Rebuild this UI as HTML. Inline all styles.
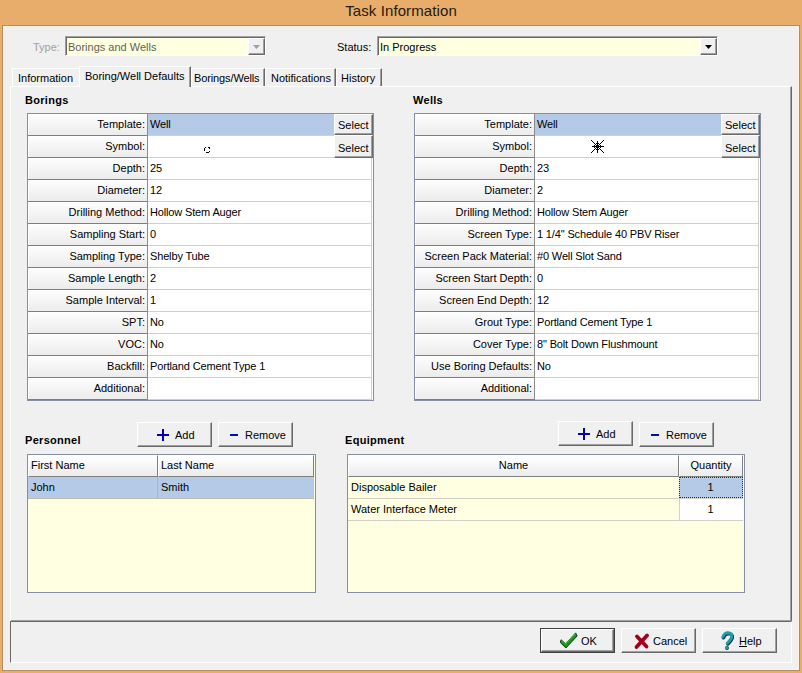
<!DOCTYPE html><html><head><meta charset="utf-8"><style>
html,body{margin:0;padding:0}
body{width:802px;height:673px;overflow:hidden;position:relative;background:#e8ad6b;font-family:"Liberation Sans",sans-serif;font-size:11px;color:#000}
body div{position:absolute;box-sizing:border-box}
.t{white-space:nowrap;line-height:13px;height:13px;letter-spacing:0}
.b{font-weight:bold;letter-spacing:0.3px}
</style></head><body>
<div style="left:2px;top:25px;width:798px;height:646px;background:#b88d5c"></div>
<div style="left:3px;top:26px;width:796px;height:644px;background:#fcf3e6"></div>
<div style="left:4px;top:27px;width:794px;height:642px;background:#f0f0f0"></div>
<div style="left:0;top:1px;width:802px;text-align:center;font-size:15px;line-height:19px;color:#25190d;letter-spacing:0.1px">Task Information</div>
<div class="t" style="left:33px;top:41px;color:#a0a0a0">Type:</div>
<div style="left:65px;top:36px;width:201px;height:20px;background:#ffffe1;border-top:1px solid #a0a0a0;border-left:1px solid #a0a0a0;border-right:1px solid #fff;border-bottom:1px solid #fff"></div>
<div style="left:66px;top:37px;width:199px;height:1px;background:#696969"></div>
<div style="left:66px;top:37px;width:1px;height:18px;background:#696969"></div>
<div class="t" style="left:68px;top:41px;color:#5f5f58">Borings and Wells</div>
<div style="left:248px;top:38px;width:17px;height:17px;background:#f0f0f0;border-top:1px solid #fff;border-left:1px solid #fff;border-right:1px solid #696969;border-bottom:1px solid #696969;box-sizing:border-box;"></div>
<div style="left:249px;top:53px;width:15px;height:1px;background:#a0a0a0"></div>
<div style="left:263px;top:39px;width:1px;height:15px;background:#a0a0a0"></div>
<svg style="position:absolute;left:253px;top:45px" width="8" height="5"><polygon points="0,0 7,0 3.5,4" fill="#a0a0a0"/></svg>
<div class="t" style="left:337px;top:41px;">Status:</div>
<div style="left:377px;top:36px;width:341px;height:20px;background:#ffffe1;border-top:1px solid #a0a0a0;border-left:1px solid #a0a0a0;border-right:1px solid #fff;border-bottom:1px solid #fff"></div>
<div style="left:378px;top:37px;width:339px;height:1px;background:#696969"></div>
<div style="left:378px;top:37px;width:1px;height:18px;background:#696969"></div>
<div class="t" style="left:380px;top:41px;color:#000">In Progress</div>
<div style="left:700px;top:38px;width:17px;height:17px;background:#f0f0f0;border-top:1px solid #fff;border-left:1px solid #fff;border-right:1px solid #696969;border-bottom:1px solid #696969;box-sizing:border-box;"></div>
<div style="left:701px;top:53px;width:15px;height:1px;background:#a0a0a0"></div>
<div style="left:715px;top:39px;width:1px;height:15px;background:#a0a0a0"></div>
<svg style="position:absolute;left:705px;top:45px" width="8" height="5"><polygon points="0,0 7,0 3.5,4" fill="#000"/></svg>
<div style="left:10px;top:86px;width:782px;height:536px;background:#f0f0f0;border-top:1px solid #fff;border-left:1px solid #fff;border-right:1px solid #696969;border-bottom:1px solid #696969"></div>
<div style="left:790px;top:87px;width:1px;height:534px;background:#a0a0a0"></div>
<div style="left:11px;top:620px;width:780px;height:1px;background:#a0a0a0"></div>
<div style="left:12px;top:68px;width:67px;height:18px;background:#f0f0f0;border-top:1px solid #fff;border-left:1px solid #fff"></div>
<div class="t" style="left:18px;top:72px;">Information</div>
<div style="left:191px;top:68px;width:74px;height:18px;background:#f0f0f0;border-top:1px solid #fff;border-left:1px solid #fff;border-right:1px solid #696969"></div>
<div style="left:263px;top:69px;width:1px;height:17px;background:#a0a0a0"></div>
<div class="t" style="left:194px;top:72px;letter-spacing:-0.12px">Borings/Wells</div>
<div style="left:265px;top:68px;width:71px;height:18px;background:#f0f0f0;border-top:1px solid #fff;border-left:1px solid #fff;border-right:1px solid #696969"></div>
<div style="left:334px;top:69px;width:1px;height:17px;background:#a0a0a0"></div>
<div class="t" style="left:271px;top:72px;letter-spacing:0px">Notifications</div>
<div style="left:336px;top:68px;width:46px;height:18px;background:#f0f0f0;border-top:1px solid #fff;border-left:1px solid #fff;border-right:1px solid #696969"></div>
<div style="left:380px;top:69px;width:1px;height:17px;background:#a0a0a0"></div>
<div class="t" style="left:341px;top:72px;letter-spacing:0px">History</div>
<div style="left:79px;top:66px;width:112px;height:21px;background:#f0f0f0;border-top:1px solid #fff;border-left:1px solid #fff;border-right:1px solid #696969"></div>
<div style="left:189px;top:67px;width:1px;height:20px;background:#a0a0a0"></div>
<div style="left:80px;top:86px;width:109px;height:1px;background:#f0f0f0"></div>
<div class="t" style="left:85px;top:70px;">Boring/Well Defaults</div>
<div style="left:10px;top:621px;width:782px;height:42px;border-top:1px solid #696969;border-left:1px solid #696969;border-right:1px solid #fff;border-bottom:1px solid #fff"></div>
<div class="t b" style="left:25px;top:94px;">Borings</div>
<div class="t b" style="left:413px;top:94px;">Wells</div>
<div style="left:27px;top:113px;width:347px;height:288px;background:#fff;border:1px solid #858ea2"></div>
<div style="left:28px;top:114px;width:119px;height:21px;background:linear-gradient(#fdfdfd,#ececec);border-top:1px solid #fff;border-left:1px solid #fff"></div>
<div style="left:28px;top:135px;width:119px;height:1px;background:#7f7f7f"></div>
<div class="t" style="left:28px;top:118px;width:119px;text-align:right;padding-right:2px">Template:</div>
<div style="left:148px;top:114px;width:224px;height:21px;background:#b4cae6"></div>
<div style="left:148px;top:135px;width:224px;height:1px;background:#d4d0c8"></div>
<div class="t" style="left:150px;top:118px;letter-spacing:-0.15px">Well</div>
<div style="left:28px;top:136px;width:119px;height:21px;background:linear-gradient(#fdfdfd,#ececec);border-top:1px solid #fff;border-left:1px solid #fff"></div>
<div style="left:28px;top:157px;width:119px;height:1px;background:#7f7f7f"></div>
<div class="t" style="left:28px;top:140px;width:119px;text-align:right;padding-right:2px">Symbol:</div>
<div style="left:148px;top:157px;width:224px;height:1px;background:#d4d0c8"></div>
<div style="left:28px;top:158px;width:119px;height:21px;background:linear-gradient(#fdfdfd,#ececec);border-top:1px solid #fff;border-left:1px solid #fff"></div>
<div style="left:28px;top:179px;width:119px;height:1px;background:#7f7f7f"></div>
<div class="t" style="left:28px;top:162px;width:119px;text-align:right;padding-right:2px">Depth:</div>
<div style="left:148px;top:179px;width:224px;height:1px;background:#d4d0c8"></div>
<div class="t" style="left:150px;top:162px;letter-spacing:-0.15px">25</div>
<div style="left:28px;top:180px;width:119px;height:21px;background:linear-gradient(#fdfdfd,#ececec);border-top:1px solid #fff;border-left:1px solid #fff"></div>
<div style="left:28px;top:201px;width:119px;height:1px;background:#7f7f7f"></div>
<div class="t" style="left:28px;top:184px;width:119px;text-align:right;padding-right:2px">Diameter:</div>
<div style="left:148px;top:201px;width:224px;height:1px;background:#d4d0c8"></div>
<div class="t" style="left:150px;top:184px;letter-spacing:-0.15px">12</div>
<div style="left:28px;top:202px;width:119px;height:21px;background:linear-gradient(#fdfdfd,#ececec);border-top:1px solid #fff;border-left:1px solid #fff"></div>
<div style="left:28px;top:223px;width:119px;height:1px;background:#7f7f7f"></div>
<div class="t" style="left:28px;top:206px;width:119px;text-align:right;padding-right:2px">Drilling Method:</div>
<div style="left:148px;top:223px;width:224px;height:1px;background:#d4d0c8"></div>
<div class="t" style="left:150px;top:206px;letter-spacing:-0.15px">Hollow Stem Auger</div>
<div style="left:28px;top:224px;width:119px;height:21px;background:linear-gradient(#fdfdfd,#ececec);border-top:1px solid #fff;border-left:1px solid #fff"></div>
<div style="left:28px;top:245px;width:119px;height:1px;background:#7f7f7f"></div>
<div class="t" style="left:28px;top:228px;width:119px;text-align:right;padding-right:2px">Sampling Start:</div>
<div style="left:148px;top:245px;width:224px;height:1px;background:#d4d0c8"></div>
<div class="t" style="left:150px;top:228px;letter-spacing:-0.15px">0</div>
<div style="left:28px;top:246px;width:119px;height:21px;background:linear-gradient(#fdfdfd,#ececec);border-top:1px solid #fff;border-left:1px solid #fff"></div>
<div style="left:28px;top:267px;width:119px;height:1px;background:#7f7f7f"></div>
<div class="t" style="left:28px;top:250px;width:119px;text-align:right;padding-right:2px">Sampling Type:</div>
<div style="left:148px;top:267px;width:224px;height:1px;background:#d4d0c8"></div>
<div class="t" style="left:150px;top:250px;letter-spacing:-0.15px">Shelby Tube</div>
<div style="left:28px;top:268px;width:119px;height:21px;background:linear-gradient(#fdfdfd,#ececec);border-top:1px solid #fff;border-left:1px solid #fff"></div>
<div style="left:28px;top:289px;width:119px;height:1px;background:#7f7f7f"></div>
<div class="t" style="left:28px;top:272px;width:119px;text-align:right;padding-right:2px">Sample Length:</div>
<div style="left:148px;top:289px;width:224px;height:1px;background:#d4d0c8"></div>
<div class="t" style="left:150px;top:272px;letter-spacing:-0.15px">2</div>
<div style="left:28px;top:290px;width:119px;height:21px;background:linear-gradient(#fdfdfd,#ececec);border-top:1px solid #fff;border-left:1px solid #fff"></div>
<div style="left:28px;top:311px;width:119px;height:1px;background:#7f7f7f"></div>
<div class="t" style="left:28px;top:294px;width:119px;text-align:right;padding-right:2px">Sample Interval:</div>
<div style="left:148px;top:311px;width:224px;height:1px;background:#d4d0c8"></div>
<div class="t" style="left:150px;top:294px;letter-spacing:-0.15px">1</div>
<div style="left:28px;top:312px;width:119px;height:21px;background:linear-gradient(#fdfdfd,#ececec);border-top:1px solid #fff;border-left:1px solid #fff"></div>
<div style="left:28px;top:333px;width:119px;height:1px;background:#7f7f7f"></div>
<div class="t" style="left:28px;top:316px;width:119px;text-align:right;padding-right:2px">SPT:</div>
<div style="left:148px;top:333px;width:224px;height:1px;background:#d4d0c8"></div>
<div class="t" style="left:150px;top:316px;letter-spacing:-0.15px">No</div>
<div style="left:28px;top:334px;width:119px;height:21px;background:linear-gradient(#fdfdfd,#ececec);border-top:1px solid #fff;border-left:1px solid #fff"></div>
<div style="left:28px;top:355px;width:119px;height:1px;background:#7f7f7f"></div>
<div class="t" style="left:28px;top:338px;width:119px;text-align:right;padding-right:2px">VOC:</div>
<div style="left:148px;top:355px;width:224px;height:1px;background:#d4d0c8"></div>
<div class="t" style="left:150px;top:338px;letter-spacing:-0.15px">No</div>
<div style="left:28px;top:356px;width:119px;height:21px;background:linear-gradient(#fdfdfd,#ececec);border-top:1px solid #fff;border-left:1px solid #fff"></div>
<div style="left:28px;top:377px;width:119px;height:1px;background:#7f7f7f"></div>
<div class="t" style="left:28px;top:360px;width:119px;text-align:right;padding-right:2px">Backfill:</div>
<div style="left:148px;top:377px;width:224px;height:1px;background:#d4d0c8"></div>
<div class="t" style="left:150px;top:360px;letter-spacing:-0.15px">Portland Cement Type 1</div>
<div style="left:28px;top:378px;width:119px;height:21px;background:linear-gradient(#fdfdfd,#ececec);border-top:1px solid #fff;border-left:1px solid #fff"></div>
<div style="left:28px;top:399px;width:119px;height:1px;background:#7f7f7f"></div>
<div class="t" style="left:28px;top:382px;width:119px;text-align:right;padding-right:2px">Additional:</div>
<div style="left:148px;top:399px;width:224px;height:1px;background:#d4d0c8"></div>
<div style="left:147px;top:114px;width:1px;height:286px;background:#8c8c8c"></div>
<div style="left:371px;top:114px;width:1px;height:286px;background:#d4d0c8"></div>
<div style="left:334px;top:114px;width:39px;height:21px;background:#f0f0f0;border-top:1px solid #fff;border-left:1px solid #fff;border-right:1px solid #696969;border-bottom:1px solid #696969;box-sizing:border-box;"></div>
<div style="left:335px;top:133px;width:37px;height:1px;background:#a0a0a0"></div>
<div style="left:371px;top:115px;width:1px;height:19px;background:#a0a0a0"></div>
<div class="t" style="left:338px;top:119px;">Select</div>
<div style="left:334px;top:135px;width:39px;height:23px;background:#f0f0f0;border-top:1px solid #fff;border-left:1px solid #fff;border-right:1px solid #696969;border-bottom:1px solid #696969;box-sizing:border-box;"></div>
<div style="left:335px;top:156px;width:37px;height:1px;background:#a0a0a0"></div>
<div style="left:371px;top:136px;width:1px;height:21px;background:#a0a0a0"></div>
<div class="t" style="left:338px;top:142px;">Select</div>
<div style="left:414px;top:113px;width:347px;height:288px;background:#fff;border:1px solid #858ea2"></div>
<div style="left:415px;top:114px;width:119px;height:21px;background:linear-gradient(#fdfdfd,#ececec);border-top:1px solid #fff;border-left:1px solid #fff"></div>
<div style="left:415px;top:135px;width:119px;height:1px;background:#7f7f7f"></div>
<div class="t" style="left:415px;top:118px;width:119px;text-align:right;padding-right:2px">Template:</div>
<div style="left:535px;top:114px;width:224px;height:21px;background:#b4cae6"></div>
<div style="left:535px;top:135px;width:224px;height:1px;background:#d4d0c8"></div>
<div class="t" style="left:537px;top:118px;letter-spacing:-0.15px">Well</div>
<div style="left:415px;top:136px;width:119px;height:21px;background:linear-gradient(#fdfdfd,#ececec);border-top:1px solid #fff;border-left:1px solid #fff"></div>
<div style="left:415px;top:157px;width:119px;height:1px;background:#7f7f7f"></div>
<div class="t" style="left:415px;top:140px;width:119px;text-align:right;padding-right:2px">Symbol:</div>
<div style="left:535px;top:157px;width:224px;height:1px;background:#d4d0c8"></div>
<div style="left:415px;top:158px;width:119px;height:21px;background:linear-gradient(#fdfdfd,#ececec);border-top:1px solid #fff;border-left:1px solid #fff"></div>
<div style="left:415px;top:179px;width:119px;height:1px;background:#7f7f7f"></div>
<div class="t" style="left:415px;top:162px;width:119px;text-align:right;padding-right:2px">Depth:</div>
<div style="left:535px;top:179px;width:224px;height:1px;background:#d4d0c8"></div>
<div class="t" style="left:537px;top:162px;letter-spacing:-0.15px">23</div>
<div style="left:415px;top:180px;width:119px;height:21px;background:linear-gradient(#fdfdfd,#ececec);border-top:1px solid #fff;border-left:1px solid #fff"></div>
<div style="left:415px;top:201px;width:119px;height:1px;background:#7f7f7f"></div>
<div class="t" style="left:415px;top:184px;width:119px;text-align:right;padding-right:2px">Diameter:</div>
<div style="left:535px;top:201px;width:224px;height:1px;background:#d4d0c8"></div>
<div class="t" style="left:537px;top:184px;letter-spacing:-0.15px">2</div>
<div style="left:415px;top:202px;width:119px;height:21px;background:linear-gradient(#fdfdfd,#ececec);border-top:1px solid #fff;border-left:1px solid #fff"></div>
<div style="left:415px;top:223px;width:119px;height:1px;background:#7f7f7f"></div>
<div class="t" style="left:415px;top:206px;width:119px;text-align:right;padding-right:2px">Drilling Method:</div>
<div style="left:535px;top:223px;width:224px;height:1px;background:#d4d0c8"></div>
<div class="t" style="left:537px;top:206px;letter-spacing:-0.15px">Hollow Stem Auger</div>
<div style="left:415px;top:224px;width:119px;height:21px;background:linear-gradient(#fdfdfd,#ececec);border-top:1px solid #fff;border-left:1px solid #fff"></div>
<div style="left:415px;top:245px;width:119px;height:1px;background:#7f7f7f"></div>
<div class="t" style="left:415px;top:228px;width:119px;text-align:right;padding-right:2px">Screen Type:</div>
<div style="left:535px;top:245px;width:224px;height:1px;background:#d4d0c8"></div>
<div class="t" style="left:537px;top:228px;letter-spacing:-0.15px">1 1/4" Schedule 40 PBV Riser</div>
<div style="left:415px;top:246px;width:119px;height:21px;background:linear-gradient(#fdfdfd,#ececec);border-top:1px solid #fff;border-left:1px solid #fff"></div>
<div style="left:415px;top:267px;width:119px;height:1px;background:#7f7f7f"></div>
<div class="t" style="left:415px;top:250px;width:119px;text-align:right;padding-right:2px">Screen Pack Material:</div>
<div style="left:535px;top:267px;width:224px;height:1px;background:#d4d0c8"></div>
<div class="t" style="left:537px;top:250px;letter-spacing:-0.15px">#0 Well Slot Sand</div>
<div style="left:415px;top:268px;width:119px;height:21px;background:linear-gradient(#fdfdfd,#ececec);border-top:1px solid #fff;border-left:1px solid #fff"></div>
<div style="left:415px;top:289px;width:119px;height:1px;background:#7f7f7f"></div>
<div class="t" style="left:415px;top:272px;width:119px;text-align:right;padding-right:2px">Screen Start Depth:</div>
<div style="left:535px;top:289px;width:224px;height:1px;background:#d4d0c8"></div>
<div class="t" style="left:537px;top:272px;letter-spacing:-0.15px">0</div>
<div style="left:415px;top:290px;width:119px;height:21px;background:linear-gradient(#fdfdfd,#ececec);border-top:1px solid #fff;border-left:1px solid #fff"></div>
<div style="left:415px;top:311px;width:119px;height:1px;background:#7f7f7f"></div>
<div class="t" style="left:415px;top:294px;width:119px;text-align:right;padding-right:2px">Screen End Depth:</div>
<div style="left:535px;top:311px;width:224px;height:1px;background:#d4d0c8"></div>
<div class="t" style="left:537px;top:294px;letter-spacing:-0.15px">12</div>
<div style="left:415px;top:312px;width:119px;height:21px;background:linear-gradient(#fdfdfd,#ececec);border-top:1px solid #fff;border-left:1px solid #fff"></div>
<div style="left:415px;top:333px;width:119px;height:1px;background:#7f7f7f"></div>
<div class="t" style="left:415px;top:316px;width:119px;text-align:right;padding-right:2px">Grout Type:</div>
<div style="left:535px;top:333px;width:224px;height:1px;background:#d4d0c8"></div>
<div class="t" style="left:537px;top:316px;letter-spacing:-0.15px">Portland Cement Type 1</div>
<div style="left:415px;top:334px;width:119px;height:21px;background:linear-gradient(#fdfdfd,#ececec);border-top:1px solid #fff;border-left:1px solid #fff"></div>
<div style="left:415px;top:355px;width:119px;height:1px;background:#7f7f7f"></div>
<div class="t" style="left:415px;top:338px;width:119px;text-align:right;padding-right:2px">Cover Type:</div>
<div style="left:535px;top:355px;width:224px;height:1px;background:#d4d0c8"></div>
<div class="t" style="left:537px;top:338px;letter-spacing:-0.15px">8" Bolt Down Flushmount</div>
<div style="left:415px;top:356px;width:119px;height:21px;background:linear-gradient(#fdfdfd,#ececec);border-top:1px solid #fff;border-left:1px solid #fff"></div>
<div style="left:415px;top:377px;width:119px;height:1px;background:#7f7f7f"></div>
<div class="t" style="left:415px;top:360px;width:119px;text-align:right;padding-right:2px">Use Boring Defaults:</div>
<div style="left:535px;top:377px;width:224px;height:1px;background:#d4d0c8"></div>
<div class="t" style="left:537px;top:360px;letter-spacing:-0.15px">No</div>
<div style="left:415px;top:378px;width:119px;height:21px;background:linear-gradient(#fdfdfd,#ececec);border-top:1px solid #fff;border-left:1px solid #fff"></div>
<div style="left:415px;top:399px;width:119px;height:1px;background:#7f7f7f"></div>
<div class="t" style="left:415px;top:382px;width:119px;text-align:right;padding-right:2px">Additional:</div>
<div style="left:535px;top:399px;width:224px;height:1px;background:#d4d0c8"></div>
<div style="left:534px;top:114px;width:1px;height:286px;background:#8c8c8c"></div>
<div style="left:758px;top:114px;width:1px;height:286px;background:#d4d0c8"></div>
<div style="left:721px;top:114px;width:39px;height:21px;background:#f0f0f0;border-top:1px solid #fff;border-left:1px solid #fff;border-right:1px solid #696969;border-bottom:1px solid #696969;box-sizing:border-box;"></div>
<div style="left:722px;top:133px;width:37px;height:1px;background:#a0a0a0"></div>
<div style="left:758px;top:115px;width:1px;height:19px;background:#a0a0a0"></div>
<div class="t" style="left:725px;top:119px;">Select</div>
<div style="left:721px;top:135px;width:39px;height:23px;background:#f0f0f0;border-top:1px solid #fff;border-left:1px solid #fff;border-right:1px solid #696969;border-bottom:1px solid #696969;box-sizing:border-box;"></div>
<div style="left:722px;top:156px;width:37px;height:1px;background:#a0a0a0"></div>
<div style="left:758px;top:136px;width:1px;height:21px;background:#a0a0a0"></div>
<div class="t" style="left:725px;top:142px;">Select</div>
<svg style="position:absolute;left:203px;top:146px" width="8" height="8" shape-rendering="crispEdges" fill="#000"><rect x="1" y="2" width="1" height="1"/><rect x="1" y="3" width="1" height="1"/><rect x="1" y="4" width="1" height="1"/><rect x="2" y="1" width="1" height="1"/><rect x="3" y="6" width="1" height="1"/><rect x="4" y="6" width="1" height="1"/><rect x="5" y="1" width="1" height="1"/><rect x="5" y="6" width="1" height="1"/><rect x="6" y="1" width="1" height="1"/><rect x="6" y="2" width="1" height="1"/><rect x="6" y="5" width="1" height="1"/></svg>
<svg style="position:absolute;left:591px;top:140px" width="13" height="13" shape-rendering="crispEdges" fill="#000"><rect x="0" y="0" width="1" height="1"/><rect x="0" y="12" width="1" height="1"/><rect x="1" y="1" width="1" height="1"/><rect x="1" y="6" width="1" height="1"/><rect x="1" y="11" width="1" height="1"/><rect x="2" y="2" width="1" height="1"/><rect x="2" y="6" width="1" height="1"/><rect x="2" y="10" width="1" height="1"/><rect x="3" y="3" width="1" height="1"/><rect x="3" y="5" width="1" height="1"/><rect x="3" y="6" width="1" height="1"/><rect x="3" y="7" width="1" height="1"/><rect x="3" y="9" width="1" height="1"/><rect x="4" y="4" width="1" height="1"/><rect x="4" y="6" width="1" height="1"/><rect x="4" y="8" width="1" height="1"/><rect x="5" y="3" width="1" height="1"/><rect x="5" y="5" width="1" height="1"/><rect x="5" y="6" width="1" height="1"/><rect x="5" y="7" width="1" height="1"/><rect x="5" y="9" width="1" height="1"/><rect x="6" y="1" width="1" height="1"/><rect x="6" y="2" width="1" height="1"/><rect x="6" y="3" width="1" height="1"/><rect x="6" y="4" width="1" height="1"/><rect x="6" y="5" width="1" height="1"/><rect x="6" y="6" width="1" height="1"/><rect x="6" y="7" width="1" height="1"/><rect x="6" y="8" width="1" height="1"/><rect x="6" y="9" width="1" height="1"/><rect x="6" y="10" width="1" height="1"/><rect x="6" y="11" width="1" height="1"/><rect x="6" y="12" width="1" height="1"/><rect x="7" y="3" width="1" height="1"/><rect x="7" y="5" width="1" height="1"/><rect x="7" y="6" width="1" height="1"/><rect x="7" y="7" width="1" height="1"/><rect x="7" y="9" width="1" height="1"/><rect x="8" y="4" width="1" height="1"/><rect x="8" y="6" width="1" height="1"/><rect x="8" y="8" width="1" height="1"/><rect x="9" y="3" width="1" height="1"/><rect x="9" y="5" width="1" height="1"/><rect x="9" y="6" width="1" height="1"/><rect x="9" y="7" width="1" height="1"/><rect x="9" y="9" width="1" height="1"/><rect x="10" y="2" width="1" height="1"/><rect x="10" y="6" width="1" height="1"/><rect x="10" y="10" width="1" height="1"/><rect x="11" y="1" width="1" height="1"/><rect x="11" y="6" width="1" height="1"/><rect x="11" y="11" width="1" height="1"/><rect x="12" y="0" width="1" height="1"/><rect x="12" y="6" width="1" height="1"/><rect x="12" y="12" width="1" height="1"/></svg>
<div class="t b" style="left:25px;top:434px;">Personnel</div>
<div class="t b" style="left:345px;top:434px;">Equipment</div>
<div style="left:137px;top:422px;width:75px;height:25px;background:#f0f0f0;border-top:1px solid #fff;border-left:1px solid #fff;border-right:1px solid #696969;border-bottom:1px solid #696969;box-sizing:border-box;"></div>
<div style="left:138px;top:445px;width:73px;height:1px;background:#a0a0a0"></div>
<div style="left:210px;top:423px;width:1px;height:23px;background:#a0a0a0"></div>
<div style="left:157px;top:434px;width:12px;height:2px;background:#0000b4"></div>
<div style="left:162px;top:429px;width:2px;height:12px;background:#0000b4"></div>
<div class="t" style="left:175px;top:429px;">Add</div>
<div style="left:218px;top:422px;width:75px;height:25px;background:#f0f0f0;border-top:1px solid #fff;border-left:1px solid #fff;border-right:1px solid #696969;border-bottom:1px solid #696969;box-sizing:border-box;"></div>
<div style="left:219px;top:445px;width:73px;height:1px;background:#a0a0a0"></div>
<div style="left:291px;top:423px;width:1px;height:23px;background:#a0a0a0"></div>
<div style="left:230px;top:434px;width:8px;height:2px;background:#0010b0"></div>
<div class="t" style="left:245px;top:429px;">Remove</div>
<div style="left:558px;top:421px;width:75px;height:25px;background:#f0f0f0;border-top:1px solid #fff;border-left:1px solid #fff;border-right:1px solid #696969;border-bottom:1px solid #696969;box-sizing:border-box;"></div>
<div style="left:559px;top:444px;width:73px;height:1px;background:#a0a0a0"></div>
<div style="left:631px;top:422px;width:1px;height:23px;background:#a0a0a0"></div>
<div style="left:578px;top:433px;width:12px;height:2px;background:#0000b4"></div>
<div style="left:583px;top:428px;width:2px;height:12px;background:#0000b4"></div>
<div class="t" style="left:596px;top:428px;">Add</div>
<div style="left:639px;top:422px;width:75px;height:25px;background:#f0f0f0;border-top:1px solid #fff;border-left:1px solid #fff;border-right:1px solid #696969;border-bottom:1px solid #696969;box-sizing:border-box;"></div>
<div style="left:640px;top:445px;width:73px;height:1px;background:#a0a0a0"></div>
<div style="left:712px;top:423px;width:1px;height:23px;background:#a0a0a0"></div>
<div style="left:651px;top:434px;width:8px;height:2px;background:#0010b0"></div>
<div class="t" style="left:666px;top:429px;">Remove</div>
<div style="left:27px;top:454px;width:289px;height:139px;background:#ffffe1;border:1px solid #858ea2"></div>
<div style="left:28px;top:455px;width:130px;height:22px;background:linear-gradient(#ffffff,#ececec);border-top:1px solid #fff;border-left:1px solid #fff;border-right:1px solid #7f7f7f;border-bottom:1px solid #7f7f7f"></div>
<div class="t" style="left:31px;top:459px;">First Name</div>
<div style="left:158px;top:455px;width:156px;height:22px;background:linear-gradient(#ffffff,#ececec);border-top:1px solid #fff;border-left:1px solid #fff;border-right:1px solid #7f7f7f;border-bottom:1px solid #7f7f7f"></div>
<div class="t" style="left:161px;top:459px;">Last Name</div>
<div style="left:28px;top:477px;width:286px;height:21px;background:#b4cae6"></div>
<div style="left:157px;top:477px;width:1px;height:21px;background:#a8b8cc"></div>
<div style="left:28px;top:498px;width:286px;height:1px;background:#bdbdb0"></div>
<div class="t" style="left:31px;top:481px;">John</div>
<div class="t" style="left:161px;top:481px;">Smith</div>
<div style="left:347px;top:454px;width:398px;height:139px;background:#ffffe1;border:1px solid #858ea2"></div>
<div style="left:348px;top:455px;width:331px;height:22px;background:linear-gradient(#ffffff,#ececec);border-top:1px solid #fff;border-left:1px solid #fff;border-right:1px solid #7f7f7f;border-bottom:1px solid #7f7f7f"></div>
<div class="t" style="left:348px;top:459px;width:331px;text-align:center;">Name</div>
<div style="left:679px;top:455px;width:64px;height:22px;background:linear-gradient(#ffffff,#ececec);border-top:1px solid #fff;border-left:1px solid #fff;border-right:1px solid #7f7f7f;border-bottom:1px solid #7f7f7f"></div>
<div class="t" style="left:679px;top:459px;width:64px;text-align:center;">Quantity</div>
<div style="left:348px;top:498px;width:395px;height:1px;background:#d4d0c8"></div>
<div style="left:679px;top:477px;width:1px;height:22px;background:#d4d0c8"></div>
<div style="left:680px;top:477px;width:63px;height:21px;background:#b4cae6"></div>
<div class="t" style="left:351px;top:481px;">Disposable Bailer</div>
<div class="t" style="left:679px;top:481px;width:63px;text-align:center;">1</div>
<div style="left:348px;top:520px;width:395px;height:1px;background:#d4d0c8"></div>
<div style="left:679px;top:499px;width:1px;height:22px;background:#d4d0c8"></div>
<div style="left:680px;top:499px;width:63px;height:21px;background:#fff"></div>
<div class="t" style="left:351px;top:503px;">Water Interface Meter</div>
<div class="t" style="left:679px;top:503px;width:63px;text-align:center;">1</div>
<div style="left:679px;top:477px;width:64px;height:21px;border:1px dotted #303030"></div>
<div style="left:540px;top:628px;width:75px;height:25px;border:1px solid #404040"></div>
<div style="left:541px;top:629px;width:73px;height:23px;background:#f0f0f0;border-top:1px solid #fff;border-left:1px solid #fff;border-right:1px solid #696969;border-bottom:1px solid #696969;box-sizing:border-box;"></div>
<div style="left:542px;top:650px;width:71px;height:1px;background:#a0a0a0"></div>
<div style="left:612px;top:630px;width:1px;height:21px;background:#a0a0a0"></div>
<svg style="position:absolute;left:556px;top:629px" width="24" height="22"><polygon points="5,10.8 9.8,14.6 19.6,3.9 21.2,6.9 9.9,19 4.4,13.6" fill="#169a16" stroke="#062806" stroke-width="0.9" stroke-linejoin="round"/><path d="M5.6 11.5 L9.8 14.9 L19.4 4.7" stroke="#4cd84c" stroke-width="0.9" fill="none"/></svg>
<div class="t" style="left:581px;top:635px;">OK</div>
<div style="left:621px;top:628px;width:75px;height:25px;background:#f0f0f0;border-top:1px solid #fff;border-left:1px solid #fff;border-right:1px solid #696969;border-bottom:1px solid #696969;box-sizing:border-box;"></div>
<div style="left:622px;top:651px;width:73px;height:1px;background:#a0a0a0"></div>
<div style="left:694px;top:629px;width:1px;height:23px;background:#a0a0a0"></div>
<svg style="position:absolute;left:630px;top:630px" width="22" height="22"><path d="M7 6.5 L16.5 16.5 M17 5.5 L6.5 17" stroke="#a1001a" stroke-width="3.8" stroke-linecap="round" fill="none"/></svg>
<div class="t" style="left:653px;top:635px;">Cancel</div>
<div style="left:702px;top:628px;width:75px;height:25px;background:#f0f0f0;border-top:1px solid #fff;border-left:1px solid #fff;border-right:1px solid #696969;border-bottom:1px solid #696969;box-sizing:border-box;"></div>
<div style="left:703px;top:651px;width:73px;height:1px;background:#a0a0a0"></div>
<div style="left:775px;top:629px;width:1px;height:23px;background:#a0a0a0"></div>
<svg style="position:absolute;left:716px;top:628px" width="24" height="24"><path d="M6.8 9 Q8.5 4.8 12 4.8 Q16 5 15.8 8.6 Q15.2 11.3 11.2 15.2" stroke="#0c2a4a" stroke-width="3.4" fill="none" stroke-linecap="round" transform="translate(0.6,0.8)"/><path d="M6.8 9 Q8.5 4.8 12 4.8 Q16 5 15.8 8.6 Q15.2 11.3 11.2 15.2" stroke="#1f9ea6" stroke-width="3" fill="none" stroke-linecap="round"/><circle cx="11" cy="20" r="1.9" fill="#0c2a4a"/><circle cx="10.7" cy="19.7" r="1.5" fill="#1f9ea6"/></svg>
<div class="t" style="left:739px;top:635px;"><u>H</u>elp</div>
</body></html>
